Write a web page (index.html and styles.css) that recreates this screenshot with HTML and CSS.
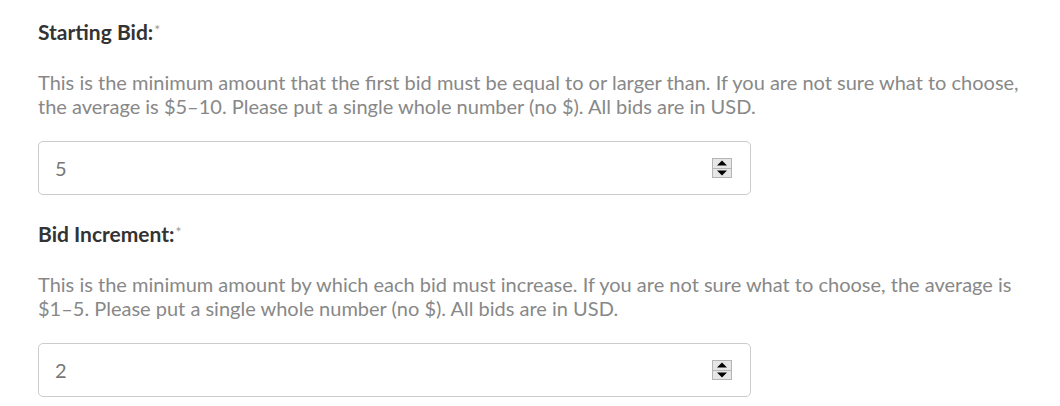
FILE: index.html
```html
<!DOCTYPE html>
<html lang="en">
<head>
<meta charset="utf-8">
<title>Bid settings</title>
<link rel="stylesheet" href="styles.css">
</head>
<body>
<form class="form">
  <div class="field">
    <label class="label" for="start">Starting Bid:<span class="req">*</span></label>
    <p class="help">This is the minimum amount that the first bid must be equal to or larger than. If you are not sure what to choose, the average is $5–10. Please put a single whole number (no $). All bids are in USD.</p>
    <div class="input-wrap">
      <input class="input" id="start" type="text" value="5">
      <span class="spinner"><span class="spin up"></span><span class="spin down"></span></span>
    </div>
  </div>
  <div class="field">
    <label class="label" for="inc">Bid Increment:<span class="req">*</span></label>
    <p class="help">This is the minimum amount by which each bid must increase. If you are not sure what to choose, the average is $1–5. Please put a single whole number (no $). All bids are in USD.</p>
    <div class="input-wrap">
      <input class="input" id="inc" type="text" value="2">
      <span class="spinner"><span class="spin up"></span><span class="spin down"></span></span>
    </div>
  </div>
</form>
</body>
</html>
```
FILE: styles.css
```css
html, body {
  margin: 0;
  padding: 0;
  background: #fff;
}
body {
  font-family: Lato, "Open Sans", sans-serif;
}
.form {
  padding: 20px 0 0 38px;
  width: 1000px;
}
.field {
  display: flex;
  flex-direction: column;
  margin-bottom: 27px;
}
.label {
  font-size: 21px;
  font-weight: 700;
  line-height: 24px;
  color: #333;
}
.req {
  font-size: 14px;
  font-weight: 400;
  color: #999;
  vertical-align: top;
  position: relative;
  top: -2px;
  margin-left: 1px;
}
.help {
  margin: 26px 0 23px;
  font-size: 20px;
  line-height: 24px;
  color: #888;
}
.input-wrap {
  position: relative;
  width: 713px;
}
.input {
  box-sizing: border-box;
  display: block;
  width: 713px;
  height: 54px;
  border: 1px solid #ccc;
  border-radius: 5px;
  padding: 0 16px;
  font-family: Lato, sans-serif;
  font-size: 20px;
  color: #777;
  outline: none;
  background: #fff;
}
.spinner {
  position: absolute;
  right: 19px;
  top: 17px;
  width: 18px;
  height: 18px;
  border: 1px solid #b5b5b5;
  background: #e6e6e6;
  display: flex;
  flex-direction: column;
}
.spin {
  flex: 1;
  position: relative;
}
.spin.up {
  border-bottom: 1px solid #b5b5b5;
}
.spin::after {
  content: "";
  position: absolute;
  left: 50%;
  top: 50%;
  width: 0;
  height: 0;
  border-left: 5px solid transparent;
  border-right: 5px solid transparent;
  transform: translate(-50%, -50%);
}
.spin.up::after {
  border-bottom: 5px solid #000;
}
.spin.down::after {
  border-top: 5px solid #000;
}
```
